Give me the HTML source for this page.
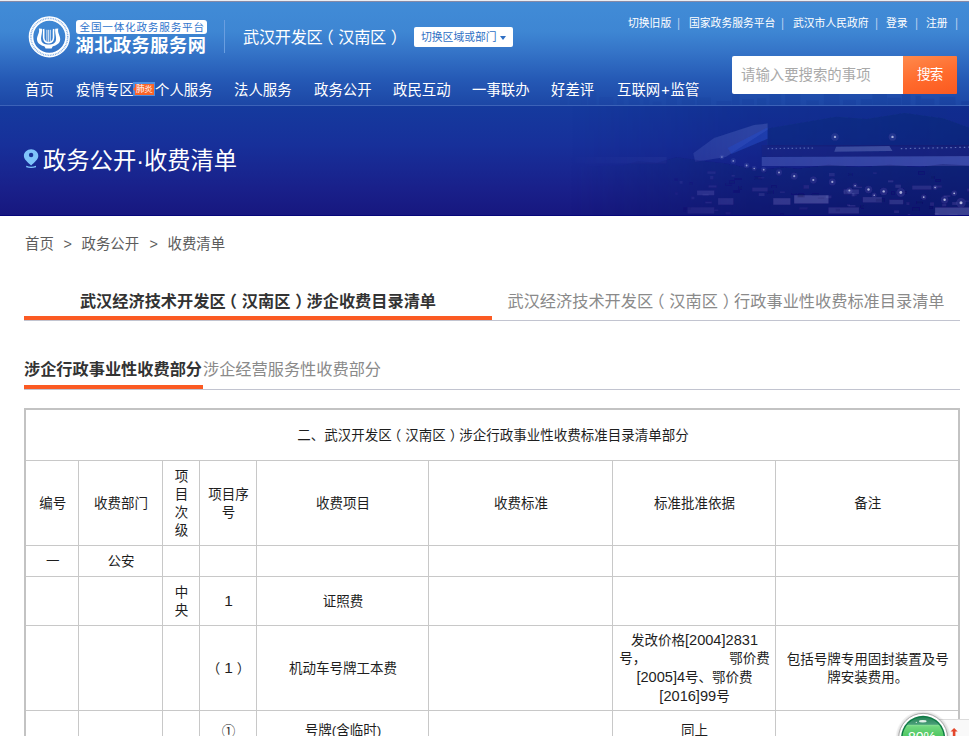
<!DOCTYPE html>
<html lang="zh-CN">
<head>
<meta charset="utf-8">
<title>政务公开·收费清单</title>
<style>
*{box-sizing:border-box;margin:0;padding:0}
html,body{width:969px;height:736px;overflow:hidden;background:#fff}
body{font-family:"Liberation Sans","Noto Sans CJK SC",sans-serif;color:#333;position:relative}
.abs{position:absolute;white-space:nowrap}
#hdr{position:absolute;left:0;top:0;width:969px;height:106px;background:linear-gradient(180deg,#418cd7 0%,#3e86d3 30%,#3473c7 50%,#2559b5 75%,#1c46a5 100%)}
#hdr .line{position:absolute;left:0;top:105px;width:969px;height:1px;background:#3c62b8}
#banner{position:absolute;left:0;top:106px;width:969px;height:110px;background:linear-gradient(180deg,#153a9e 0%,#17309a 35%,#19208a 75%,#17177f 100%);overflow:hidden}
.nav{position:absolute;top:80px;font-size:14.4px;line-height:20px;color:#fff;white-space:nowrap}
.top{position:absolute;top:15px;font-size:10.8px;line-height:16px;color:#fff;white-space:nowrap}
.sep{position:absolute;top:15px;font-size:12px;line-height:16px;color:#b4cdee}

#tb{position:absolute;left:24px;top:408px;width:936px;border-collapse:collapse;table-layout:fixed;border:2px solid #c3c3c3;font-size:13.5px;line-height:18px;color:#1e1e1e}
#tb td{border:1px solid #c8c8c8;text-align:center;vertical-align:middle;padding:2px 0 0 2px}
.bc{position:absolute;top:234px;font-size:14.4px;line-height:20px;color:#5c5c5c;white-space:nowrap}
.pl{position:relative;left:-.3em}.pr{position:relative;left:.3em}
.n{font-size:14.600px}.d{font-size:15.500px}
</style>
</head>
<body>
<div id="hdr">
  <svg id="sky" class="abs" style="left:560px;top:90px" width="409" height="15" viewBox="0 0 409 15"><rect x="0.0" y="6.6" width="7.6" height="8.4" fill="#0a2a88" opacity="0.05"/><rect x="9.8" y="5.7" width="11.6" height="9.3" fill="#0a2a88" opacity="0.05"/><rect x="21.9" y="3.6" width="5.1" height="11.4" fill="#0a2a88" opacity="0.06"/><rect x="28.6" y="2.0" width="7.6" height="13.0" fill="#0a2a88" opacity="0.06"/><rect x="39.0" y="7.2" width="14.2" height="7.8" fill="#0a2a88" opacity="0.06"/><rect x="57.0" y="5.7" width="6.7" height="9.3" fill="#0a2a88" opacity="0.07"/><rect x="68.9" y="4.6" width="10.8" height="10.4" fill="#0a2a88" opacity="0.07"/><rect x="83.7" y="4.4" width="5.7" height="10.6" fill="#0a2a88" opacity="0.07"/><rect x="92.9" y="11.7" width="8.3" height="3.3" fill="#0a2a88" opacity="0.08"/><rect x="106.4" y="4.8" width="10.2" height="10.2" fill="#0a2a88" opacity="0.08"/><rect x="121.9" y="2.8" width="12.9" height="12.2" fill="#0a2a88" opacity="0.09"/><rect x="137.1" y="7.6" width="13.8" height="7.4" fill="#0a2a88" opacity="0.09"/><rect x="156.5" y="11.0" width="14.7" height="4.0" fill="#0a2a88" opacity="0.10"/><rect x="172.0" y="2.3" width="7.4" height="12.7" fill="#0a2a88" opacity="0.10"/><rect x="182.0" y="9.0" width="11.9" height="6.0" fill="#0a2a88" opacity="0.10"/><rect x="197.0" y="8.5" width="9.2" height="6.5" fill="#0a2a88" opacity="0.11"/><rect x="209.7" y="3.0" width="11.4" height="12.0" fill="#0a2a88" opacity="0.11"/><rect x="225.2" y="3.4" width="15.2" height="11.6" fill="#0a2a88" opacity="0.12"/><rect x="246.4" y="10.4" width="12.4" height="4.6" fill="#0a2a88" opacity="0.12"/><rect x="263.9" y="3.0" width="15.6" height="12.0" fill="#0a2a88" opacity="0.13"/><rect x="283.0" y="9.9" width="12.9" height="5.1" fill="#0a2a88" opacity="0.13"/><rect x="300.8" y="9.2" width="11.3" height="5.8" fill="#0a2a88" opacity="0.14"/><rect x="312.5" y="2.1" width="14.4" height="12.9" fill="#0a2a88" opacity="0.14"/><rect x="327.4" y="7.9" width="13.8" height="7.1" fill="#0a2a88" opacity="0.15"/><rect x="342.1" y="4.3" width="8.2" height="10.7" fill="#0a2a88" opacity="0.15"/><rect x="355.6" y="5.9" width="5.5" height="9.1" fill="#0a2a88" opacity="0.15"/><rect x="361.4" y="8.7" width="12.9" height="6.3" fill="#0a2a88" opacity="0.16"/><rect x="379.6" y="6.9" width="15.8" height="8.1" fill="#0a2a88" opacity="0.16"/><rect x="401.3" y="11.2" width="8.4" height="3.8" fill="#0a2a88" opacity="0.17"/></svg>
  <div class="line"></div>
  <div class="abs" style="left:0;top:0;width:969px;height:1px;background:#e9ecf2"></div>
  <div class="abs" style="left:0;top:1px;width:969px;height:1px;background:#8589a6"></div>
  <!-- logo -->
  <svg class="abs" style="left:27px;top:15px" width="44" height="44" viewBox="0 0 44 44">
    <circle cx="22.300" cy="21.800" r="18.300" fill="none" stroke="#fff" stroke-width="4.600"/>
    <circle cx="22.300" cy="21.800" r="18.400" fill="none" stroke="#5a94dc" stroke-width="1.500" stroke-dasharray="0.900 0.800" opacity="0.750"/>
    <g transform="translate(-0.400,-0.200)" fill="#fff">
      <path d="M12.300 13.600C13.500 18 10 21 10.400 25C10.800 29 15 31 18 31.600L19 33.600L25 33.600L26 31.600C29 31 33.200 29 33.600 25C34 21 30.500 18 31.700 13.600L28.600 14C28.200 19 29.900 21.500 29.400 25C29 28.300 26 29.800 22 29.800C18 29.800 15 28.300 14.600 25C14.100 21.500 15.800 19 15.400 14Z"/>
      <path d="M16.900 14.200C17.700 19 16.300 22.500 17.600 25.200C18.600 27.400 20.400 28 22 28C23.600 28 25.400 27.400 26.400 25.200C27.700 22.500 26.300 19 27.100 14.200" fill="none" stroke="#fff" stroke-width="1.600"/>
      <path d="M20.300 15V27.500M22 15V27.500M23.700 15V27.500" fill="none" stroke="#fff" stroke-width="0.800"/>
    </g>
  </svg>
  <div class="abs" style="left:75.500px;top:20px;width:131px;height:13.500px;background:#fff;border-radius:3px"></div>
  <div class="abs" style="left:79.500px;top:18.800px;font-size:10.600px;line-height:16px;color:#2e74cc;letter-spacing:0.800px">全国一体化政务服务平台</div>
  <div class="abs" style="left:75.500px;top:33.300px;font-size:18.200px;line-height:26px;color:#fff;font-weight:700;letter-spacing:0.500px">湖北政务服务网</div>
  <div class="abs" style="left:224px;top:20px;width:1px;height:33px;background:#6a9ee0"></div>
  <div class="abs" style="left:243px;top:25px;font-size:16.2px;line-height:24px;color:#fff;letter-spacing:-0.3px">武汉开发区<span class="pl">（</span>汉南区<span class="pr">）</span></div>
  <div class="abs" style="left:414px;top:27px;width:99px;height:20px;background:#fff;border-radius:2px"></div>
  <div class="abs" style="left:421px;top:29px;font-size:10.8px;line-height:16px;color:#2e6fc4">切换区域或部门</div>
  <div class="abs" style="left:500px;top:36px;width:0;height:0;border-left:3px solid transparent;border-right:3px solid transparent;border-top:4px solid #2e6fc4"></div>

  <div class="top" style="left:628px">切换旧版</div>
  <div class="sep" style="left:677px">|</div>
  <div class="top" style="left:689px">国家政务服务平台</div>
  <div class="sep" style="left:781px">|</div>
  <div class="top" style="left:793px">武汉市人民政府</div>
  <div class="sep" style="left:875px">|</div>
  <div class="top" style="left:886px">登录</div>
  <div class="sep" style="left:915px">|</div>
  <div class="top" style="left:926px">注册</div>
  <div class="sep" style="left:955px">|</div>

  <div class="nav" style="left:25px">首页</div>
  <div class="nav" style="left:76px">疫情专区</div>
  <div class="abs" style="left:133px;top:82px;width:21.500px;height:13.500px;background:#4c8ee2"></div><div class="abs" style="left:135px;top:84px;width:19px;height:10.500px;background:#fb6428"></div><div class="abs" style="left:132.500px;top:86.500px;width:0;height:0;border-top:2.800px solid transparent;border-bottom:2.800px solid transparent;border-right:2.800px solid #fb6428"></div>
  <div class="abs" style="left:136px;top:83.500px;font-size:8.600px;line-height:11px;color:#fff;letter-spacing:-0.3px">肺炎</div>
  <div class="nav" style="left:155px">个人服务</div>
  <div class="nav" style="left:234px">法人服务</div>
  <div class="nav" style="left:314px">政务公开</div>
  <div class="nav" style="left:393px">政民互动</div>
  <div class="nav" style="left:472px">一事联办</div>
  <div class="nav" style="left:551px">好差评</div>
  <div class="nav" style="left:617px">互联网<span style="margin:0 1px">+</span>监管</div>

  <div class="abs" style="left:732px;top:56px;width:171px;height:38px;background:#fff;border-radius:2px 0 0 2px"></div>
  <div class="abs" style="left:741px;top:65px;font-size:14.4px;line-height:20px;color:#a9a9a9">请输入要搜索的事项</div>
  <div class="abs" style="left:903px;top:56px;width:54px;height:38px;background:linear-gradient(165deg,#ff8a4c 0%,#ff6a2c 55%,#fb591f 100%);border-radius:0 1px 1px 0"></div>
  <div class="abs" style="left:917px;top:65px;font-size:13.6px;line-height:20px;color:#fff;letter-spacing:-0.8px">搜索</div>
</div>

<div id="banner">
  <svg class="abs" style="left:0;top:-1px" width="969" height="110" viewBox="0 0 969 110"><defs><linearGradient id="fade" x1="0" x2="1" y1="0" y2="0"><stop offset="0" stop-color="#fff" stop-opacity="0"/><stop offset="0.45" stop-color="#fff" stop-opacity="0.75"/><stop offset="1" stop-color="#fff" stop-opacity="1"/></linearGradient><mask id="mk"><rect x="570" y="0" width="399" height="110" fill="url(#fade)"/></mask><filter id="bl" x="0" y="0" width="100%" height="100%"><feGaussianBlur stdDeviation="0.7"/></filter></defs><g mask="url(#mk)" filter="url(#bl)"><rect x="500" y="0" width="469" height="110" fill="#0c1450" opacity="0.22"/><polygon points="767.6,23.6 805.6,17.1 836.1,11.8 866.6,14.0 904.6,7.9 942.7,13.3 969.0,22.4 969.0,41.5 767.6,41.5" fill="#0e1a62" opacity="0.3"/><polygon points="761.8,39.9 969.0,39.9 969.0,52.1 761.8,52.1" fill="#101a68" opacity="0.36"/><polygon points="761.8,52.1 969.0,51.0 969.0,60.9 761.8,60.9" fill="#7480dc" opacity="0.4"/><polygon points="523.8,52.1 666.6,52.1 666.6,58.2 523.8,58.2" fill="#6f7ad8" opacity="0.16"/><polygon points="754.2,20.1 767.6,18.6 767.6,24.7 725.7,52.1 695.2,56.7 693.3,48.3 714.2,33.1" fill="#7686dc" opacity="0.32"/><polygon points="767.6,22.4 767.6,33.8 731.4,49.1 727.6,43.0" fill="#2a54d8" opacity="0.5"/><polygon points="523.8,62.8 622.8,60.5 638.1,55.9 657.1,57.8 676.2,52.1 699.0,55.2 725.7,58.2 744.7,62.0 763.7,64.3 782.8,62.0 798.0,63.5 828.5,59.7 858.9,62.0 889.4,59.7 919.9,62.0 942.7,59.0 969.0,60.5 969.0,111.1 523.8,111.1" fill="#0b1158" opacity="0.3"/><polygon points="836.1,41.8 889.4,41.1 892.5,46.0 834.2,46.8" fill="#b0baf2" opacity="0.3"/><line x1="767.6" y1="43.7" x2="813.3" y2="43.0" stroke="#c8d0ff" stroke-width="1.2" stroke-dasharray="1.5 2.5" opacity="0.45"/><line x1="900.8" y1="43.7" x2="969.0" y2="42.2" stroke="#c8d0ff" stroke-width="1.2" stroke-dasharray="1.5 3" opacity="0.45"/><polygon points="794.2,90.2 828.5,90.2 828.5,98.6 794.2,98.6" fill="#a0aae4" opacity="0.36"/><polygon points="697.1,85.6 714.2,85.6 714.2,90.2 697.1,90.2" fill="#a0aae4" opacity="0.28"/><polygon points="718.1,93.2 733.3,93.2 733.3,99.7 718.1,99.7" fill="#a0aae4" opacity="0.22"/><polygon points="773.3,93.2 790.4,93.2 790.4,99.7 773.3,99.7" fill="#a0aae4" opacity="0.28"/><polygon points="843.7,84.5 858.9,84.5 858.9,89.1 843.7,89.1" fill="#a0aae4" opacity="0.2"/><polygon points="862.8,92.1 881.8,92.1 881.8,97.4 862.8,97.4" fill="#a0aae4" opacity="0.22"/><polygon points="889.4,94.8 903.1,94.8 903.1,99.3 889.4,99.3" fill="#a0aae4" opacity="0.2"/><polygon points="912.3,80.7 931.3,80.7 931.3,84.5 912.3,84.5" fill="#a0aae4" opacity="0.16"/><polygon points="935.1,102.4 969.0,102.4 969.0,110.0 935.1,110.0" fill="#a0aae4" opacity="0.3"/><polygon points="828.5,102.4 858.9,102.4 858.9,108.5 828.5,108.5" fill="#a0aae4" opacity="0.2"/><polygon points="687.6,102.4 714.2,102.4 714.2,108.5 687.6,108.5" fill="#a0aae4" opacity="0.18"/><polygon points="752.3,82.6 767.6,82.6 767.6,86.4 752.3,86.4" fill="#a0aae4" opacity="0.15"/><polygon points="758.1,72.1 764.4,72.1 764.4,73.4 758.1,73.4" fill="#8c98dc" opacity="0.12"/><polygon points="675.2,87.7 677.7,87.7 677.7,89.8 675.2,89.8" fill="#8c98dc" opacity="0.11"/><polygon points="829.0,68.0 834.7,68.0 834.7,71.3 829.0,71.3" fill="#8c98dc" opacity="0.15"/><polygon points="780.8,108.2 783.4,108.2 783.4,111.3 780.8,111.3" fill="#060a40" opacity="0.13"/><polygon points="825.8,90.5 831.4,90.5 831.4,93.2 825.8,93.2" fill="#8c98dc" opacity="0.15"/><polygon points="856.4,81.8 862.0,81.8 862.0,83.0 856.4,83.0" fill="#8c98dc" opacity="0.15"/><polygon points="811.9,88.7 819.0,88.7 819.0,90.9 811.9,90.9" fill="#060a40" opacity="0.12"/><polygon points="734.6,73.3 741.6,73.3 741.6,74.7 734.6,74.7" fill="#060a40" opacity="0.14"/><polygon points="930.1,97.4 934.1,97.4 934.1,100.8 930.1,100.8" fill="#8c98dc" opacity="0.14"/><polygon points="708.6,80.4 716.5,80.4 716.5,82.5 708.6,82.5" fill="#8c98dc" opacity="0.17"/><polygon points="835.8,103.8 840.0,103.8 840.0,106.5 835.8,106.5" fill="#060a40" opacity="0.15"/><polygon points="799.4,102.2 807.4,102.2 807.4,104.5 799.4,104.5" fill="#8c98dc" opacity="0.09"/><polygon points="875.9,93.8 884.2,93.8 884.2,96.8 875.9,96.8" fill="#060a40" opacity="0.17"/><polygon points="933.8,80.6 941.8,80.6 941.8,82.6 933.8,82.6" fill="#8c98dc" opacity="0.14"/><polygon points="725.2,78.0 732.0,78.0 732.0,80.1 725.2,80.1" fill="#060a40" opacity="0.09"/><polygon points="797.2,89.5 804.9,89.5 804.9,92.5 797.2,92.5" fill="#060a40" opacity="0.16"/><polygon points="964.8,95.3 969.4,95.3 969.4,97.0 964.8,97.0" fill="#8c98dc" opacity="0.1"/><polygon points="729.5,75.7 734.7,75.7 734.7,78.2 729.5,78.2" fill="#060a40" opacity="0.11"/><polygon points="702.6,88.9 708.6,88.9 708.6,90.7 702.6,90.7" fill="#8c98dc" opacity="0.16"/><polygon points="817.9,92.5 824.3,92.5 824.3,93.8 817.9,93.8" fill="#060a40" opacity="0.13"/><polygon points="780.0,86.5 784.8,86.5 784.8,88.1 780.0,88.1" fill="#8c98dc" opacity="0.13"/><polygon points="691.4,91.8 694.3,91.8 694.3,94.2 691.4,94.2" fill="#8c98dc" opacity="0.19"/><polygon points="848.5,68.5 852.1,68.5 852.1,70.5 848.5,70.5" fill="#060a40" opacity="0.19"/><polygon points="845.0,86.2 847.9,86.2 847.9,88.5 845.0,88.5" fill="#060a40" opacity="0.14"/><polygon points="754.4,71.8 761.2,71.8 761.2,74.6 754.4,74.6" fill="#060a40" opacity="0.18"/><polygon points="707.5,66.5 715.5,66.5 715.5,68.8 707.5,68.8" fill="#8c98dc" opacity="0.16"/><polygon points="942.2,98.7 946.3,98.7 946.3,101.3 942.2,101.3" fill="#8c98dc" opacity="0.16"/><polygon points="738.6,81.5 741.9,81.5 741.9,84.4 738.6,84.4" fill="#060a40" opacity="0.16"/><polygon points="848.4,100.0 855.3,100.0 855.3,101.6 848.4,101.6" fill="#8c98dc" opacity="0.18"/><polygon points="887.9,75.4 893.3,75.4 893.3,77.3 887.9,77.3" fill="#8c98dc" opacity="0.2"/><polygon points="903.5,86.1 907.0,86.1 907.0,88.7 903.5,88.7" fill="#060a40" opacity="0.13"/><polygon points="949.4,108.7 957.5,108.7 957.5,110.7 949.4,110.7" fill="#8c98dc" opacity="0.09"/><polygon points="803.7,80.2 809.0,80.2 809.0,83.6 803.7,83.6" fill="#8c98dc" opacity="0.14"/><polygon points="860.8,100.5 863.6,100.5 863.6,103.1 860.8,103.1" fill="#060a40" opacity="0.17"/><polygon points="891.1,86.4 894.4,86.4 894.4,89.3 891.1,89.3" fill="#060a40" opacity="0.09"/><polygon points="952.2,97.1 957.3,97.1 957.3,99.9 952.2,99.9" fill="#8c98dc" opacity="0.17"/><polygon points="710.1,71.0 713.3,71.0 713.3,74.2 710.1,74.2" fill="#8c98dc" opacity="0.15"/><polygon points="843.0,86.2 851.0,86.2 851.0,87.7 843.0,87.7" fill="#8c98dc" opacity="0.08"/><polygon points="906.4,97.3 909.3,97.3 909.3,100.1 906.4,100.1" fill="#8c98dc" opacity="0.13"/><polygon points="929.0,101.6 932.6,101.6 932.6,103.3 929.0,103.3" fill="#060a40" opacity="0.14"/><polygon points="895.3,79.7 900.9,79.7 900.9,82.8 895.3,82.8" fill="#8c98dc" opacity="0.19"/><polygon points="767.5,85.5 773.3,85.5 773.3,88.7 767.5,88.7" fill="#060a40" opacity="0.18"/><polygon points="931.0,71.2 934.2,71.2 934.2,73.5 931.0,73.5" fill="#060a40" opacity="0.17"/><polygon points="846.9,99.4 850.1,99.4 850.1,100.9 846.9,100.9" fill="#8c98dc" opacity="0.15"/><polygon points="758.8,88.1 764.5,88.1 764.5,91.1 758.8,91.1" fill="#8c98dc" opacity="0.19"/><polygon points="674.8,73.8 677.4,73.8 677.4,75.2 674.8,75.2" fill="#060a40" opacity="0.15"/><polygon points="894.1,105.4 899.1,105.4 899.1,108.0 894.1,108.0" fill="#8c98dc" opacity="0.16"/><polygon points="798.2,88.8 803.4,88.8 803.4,92.1 798.2,92.1" fill="#060a40" opacity="0.19"/><polygon points="935.6,74.3 940.6,74.3 940.6,76.4 935.6,76.4" fill="#060a40" opacity="0.13"/><polygon points="679.7,76.0 682.5,76.0 682.5,78.7 679.7,78.7" fill="#8c98dc" opacity="0.19"/><polygon points="705.3,96.8 711.6,96.8 711.6,98.3 705.3,98.3" fill="#8c98dc" opacity="0.2"/><polygon points="725.6,107.2 730.3,107.2 730.3,109.4 725.6,109.4" fill="#8c98dc" opacity="0.1"/><polygon points="791.7,88.0 796.1,88.0 796.1,89.6 791.7,89.6" fill="#060a40" opacity="0.09"/><polygon points="771.3,80.3 776.3,80.3 776.3,83.0 771.3,83.0" fill="#060a40" opacity="0.12"/><polygon points="851.7,87.9 854.4,87.9 854.4,91.3 851.7,91.3" fill="#8c98dc" opacity="0.2"/><polygon points="689.8,77.1 692.3,77.1 692.3,80.0 689.8,80.0" fill="#060a40" opacity="0.17"/><polygon points="912.8,102.7 919.2,102.7 919.2,106.0 912.8,106.0" fill="#060a40" opacity="0.1"/><polygon points="943.8,90.4 950.3,90.4 950.3,91.8 943.8,91.8" fill="#8c98dc" opacity="0.18"/><polygon points="714.3,104.7 718.2,104.7 718.2,105.8 714.3,105.8" fill="#8c98dc" opacity="0.18"/><polygon points="683.2,102.9 685.9,102.9 685.9,106.1 683.2,106.1" fill="#060a40" opacity="0.08"/><polygon points="967.2,83.7 975.1,83.7 975.1,86.3 967.2,86.3" fill="#8c98dc" opacity="0.14"/><polygon points="731.5,70.2 734.8,70.2 734.8,71.5 731.5,71.5" fill="#8c98dc" opacity="0.19"/><polygon points="853.2,88.7 856.7,88.7 856.7,90.9 853.2,90.9" fill="#8c98dc" opacity="0.11"/><polygon points="907.8,109.0 910.3,109.0 910.3,110.2 907.8,110.2" fill="#8c98dc" opacity="0.14"/><polygon points="733.7,85.0 740.0,85.0 740.0,87.7 733.7,87.7" fill="#060a40" opacity="0.15"/><polygon points="934.3,107.9 938.5,107.9 938.5,109.6 934.3,109.6" fill="#8c98dc" opacity="0.12"/><polygon points="916.7,96.4 922.9,96.4 922.9,98.5 916.7,98.5" fill="#060a40" opacity="0.2"/><polygon points="918.2,66.1 924.3,66.1 924.3,69.2 918.2,69.2" fill="#060a40" opacity="0.1"/><polygon points="683.5,102.3 691.1,102.3 691.1,105.0 683.5,105.0" fill="#060a40" opacity="0.15"/><polygon points="873.2,67.4 876.6,67.4 876.6,69.2 873.2,69.2" fill="#8c98dc" opacity="0.11"/><circle cx="835.0" cy="31.9" r="3.7" fill="#aab4ff" opacity="0.13"/><circle cx="835.0" cy="31.9" r="1.2" fill="#e4e8ff" opacity="0.75"/><circle cx="892.5" cy="31.9" r="3.7" fill="#aab4ff" opacity="0.13"/><circle cx="892.5" cy="31.9" r="1.2" fill="#e4e8ff" opacity="0.75"/><circle cx="794.2" cy="71.2" r="3.4" fill="#aab4ff" opacity="0.13"/><circle cx="794.2" cy="71.2" r="1.1" fill="#e4e8ff" opacity="0.75"/><circle cx="813.3" cy="75.0" r="3.4" fill="#aab4ff" opacity="0.13"/><circle cx="813.3" cy="75.0" r="1.1" fill="#e4e8ff" opacity="0.75"/><circle cx="832.3" cy="76.9" r="3.4" fill="#aab4ff" opacity="0.13"/><circle cx="832.3" cy="76.9" r="1.1" fill="#e4e8ff" opacity="0.75"/><circle cx="868.5" cy="84.5" r="3.7" fill="#aab4ff" opacity="0.13"/><circle cx="868.5" cy="84.5" r="1.2" fill="#e4e8ff" opacity="0.75"/><circle cx="883.7" cy="86.4" r="3.7" fill="#aab4ff" opacity="0.13"/><circle cx="883.7" cy="86.4" r="1.2" fill="#e4e8ff" opacity="0.75"/><circle cx="900.8" cy="87.5" r="4.4" fill="#aab4ff" opacity="0.13"/><circle cx="900.8" cy="87.5" r="1.4" fill="#e4e8ff" opacity="0.75"/><circle cx="944.6" cy="94.8" r="3.7" fill="#aab4ff" opacity="0.13"/><circle cx="944.6" cy="94.8" r="1.2" fill="#e4e8ff" opacity="0.75"/><circle cx="961.0" cy="97.8" r="4.8" fill="#aab4ff" opacity="0.13"/><circle cx="961.0" cy="97.8" r="1.5" fill="#e4e8ff" opacity="0.75"/><circle cx="746.6" cy="60.5" r="2.7" fill="#aab4ff" opacity="0.13"/><circle cx="746.6" cy="60.5" r="0.9" fill="#e4e8ff" opacity="0.75"/><circle cx="733.3" cy="55.9" r="2.7" fill="#aab4ff" opacity="0.13"/><circle cx="733.3" cy="55.9" r="0.9" fill="#e4e8ff" opacity="0.75"/><circle cx="763.7" cy="64.7" r="2.7" fill="#aab4ff" opacity="0.13"/><circle cx="763.7" cy="64.7" r="0.9" fill="#e4e8ff" opacity="0.75"/><circle cx="779.0" cy="67.4" r="3.1" fill="#aab4ff" opacity="0.13"/><circle cx="779.0" cy="67.4" r="1.0" fill="#e4e8ff" opacity="0.75"/><circle cx="849.4" cy="85.6" r="3.1" fill="#aab4ff" opacity="0.13"/><circle cx="849.4" cy="85.6" r="1.0" fill="#e4e8ff" opacity="0.75"/><circle cx="923.7" cy="92.1" r="2.7" fill="#aab4ff" opacity="0.13"/><circle cx="923.7" cy="92.1" r="0.9" fill="#e4e8ff" opacity="0.75"/><circle cx="721.9" cy="52.1" r="2.4" fill="#aab4ff" opacity="0.13"/><circle cx="721.9" cy="52.1" r="0.8" fill="#e4e8ff" opacity="0.75"/><circle cx="754.2" cy="63.5" r="2.4" fill="#aab4ff" opacity="0.13"/><circle cx="754.2" cy="63.5" r="0.8" fill="#e4e8ff" opacity="0.75"/><circle cx="855.1" cy="80.7" r="2.4" fill="#aab4ff" opacity="0.13"/><circle cx="855.1" cy="80.7" r="0.8" fill="#e4e8ff" opacity="0.75"/><circle cx="874.2" cy="90.2" r="2.4" fill="#aab4ff" opacity="0.13"/><circle cx="874.2" cy="90.2" r="0.8" fill="#e4e8ff" opacity="0.75"/><circle cx="935.1" cy="82.6" r="2.4" fill="#aab4ff" opacity="0.13"/><circle cx="935.1" cy="82.6" r="0.8" fill="#e4e8ff" opacity="0.75"/><circle cx="954.2" cy="88.3" r="2.7" fill="#aab4ff" opacity="0.13"/><circle cx="954.2" cy="88.3" r="0.9" fill="#e4e8ff" opacity="0.75"/></g></svg>
  <svg class="abs" style="left:23px;top:43px" width="17" height="20" viewBox="0 0 17 20">
    <path d="M8.100 0.200C4.100 0.200 0.900 3.200 0.900 6.900C0.900 10.400 4.800 13.200 8.100 16.400C11.400 13.200 15.300 10.400 15.300 6.900C15.300 3.200 12.100 0.200 8.100 0.200Z" fill="#7fc4fb"/>
    <circle cx="8.100" cy="6" r="2.200" fill="#1a3499"/>
    <path d="M3.200 16.700Q8.100 18.600 13 16.700L13 18.200Q8.100 19.800 3.200 18.200Z" fill="#7fc4fb"/>
  </svg>
  <div class="abs" style="left:0;top:109px;width:969px;height:1px;background:#06067a"></div>
  <div class="abs" style="left:43px;top:38px;font-size:23.3px;line-height:34px;color:#fff">政务公开·收费清单</div>
</div>

<!-- breadcrumb -->
<div class="bc" style="left:25px">首页</div><div class="bc" style="left:63.500px">&gt;</div><div class="bc" style="left:81.500px">政务公开</div><div class="bc" style="left:149.500px">&gt;</div><div class="bc" style="left:167.500px">收费清单</div>

<!-- main tabs -->
<div class="abs" style="left:24px;top:320px;width:936px;height:1px;background:#c2c4d0"></div>
<div class="abs" style="left:24px;top:316px;width:468px;height:4px;background:#fb5a23"></div>
<div class="abs" style="left:24px;top:288px;width:468px;text-align:center;font-size:16.2px;line-height:26px;color:#333;font-weight:700">武汉经济技术开发区<span class="pl">（</span>汉南区<span class="pr">）</span>涉企收费目录清单</div>
<div class="abs" style="left:492px;top:288px;width:468px;text-align:center;font-size:16.2px;line-height:26px;color:#8a8a8a">武汉经济技术开发区<span class="pl">（</span>汉南区<span class="pr">）</span>行政事业性收费标准目录清单</div>

<!-- sub tabs -->
<div class="abs" style="left:24px;top:389px;width:936px;height:1px;background:#c2c4d0"></div>
<div class="abs" style="left:24px;top:385px;width:179px;height:4px;background:#fb5a23"></div>
<div class="abs" style="left:24px;top:356px;font-size:16.2px;line-height:26px;color:#333;font-weight:700">涉企行政事业性收费部分</div>
<div class="abs" style="left:203px;top:356px;font-size:16.2px;line-height:26px;color:#8a8a8a">涉企经营服务性收费部分</div>

<!-- table -->
<table id="tb" cellspacing="0">
<colgroup><col style="width:53px"><col style="width:84px"><col style="width:37px"><col style="width:57px"><col style="width:172px"><col style="width:184px"><col style="width:163px"><col style="width:184px"></colgroup>
<tr style="height:51px"><td colspan="8">二、武汉开发区<span class="pl">（</span>汉南区<span class="pr">）</span>涉企行政事业性收费标准目录清单部分</td></tr>
<tr style="height:85px"><td>编号</td><td>收费部门</td><td>项<br>目<br>次<br>级</td><td>项目序<br>号</td><td>收费项目</td><td>收费标准</td><td>标准批准依据</td><td>备注</td></tr>
<tr style="height:31px"><td>一</td><td>公安</td><td></td><td></td><td></td><td></td><td></td><td></td></tr>
<tr style="height:49px"><td></td><td></td><td>中<br>央</td><td><span class="d">1</span></td><td>证照费</td><td></td><td></td><td></td></tr>
<tr style="height:85px"><td></td><td></td><td></td><td><span class="pl">（</span><span class="d">1</span><span class="pr">）</span></td><td>机动车号牌工本费</td><td></td><td class="ref">发改价格<span class="n">[2004]2831</span><br>号，<span style="display:inline-block;width:83px"></span>鄂价费<br><span class="n">[2005]4</span>号、鄂价费<br><span class="n">[2016]99</span>号</td><td>包括号牌专用固封装置及号<br>牌安装费用。</td></tr>
<tr style="height:60px"><td></td><td></td><td></td><td style="vertical-align:top;padding-top:12px">①</td><td style="vertical-align:top;padding-top:11px">号牌(含临时)</td><td></td><td style="vertical-align:top;padding-top:11px">同上</td><td></td></tr>
</table>

<!-- floating widget -->
<div class="abs" style="left:938px;top:719px;width:31px;height:17px;background:#f9f9f9;border-top:1px solid #dcdcdc;border-left:1px solid #dcdcdc"></div>
<svg class="abs" style="left:889px;top:706px" width="80" height="30" viewBox="889 706 80 30">
  <defs>
    <radialGradient id="sh" cx="923.100" cy="738.300" r="28" gradientUnits="userSpaceOnUse"><stop offset="0.860" stop-color="#000" stop-opacity="0.180"/><stop offset="1" stop-color="#000" stop-opacity="0"/></radialGradient>
    <linearGradient id="cap" x1="0" y1="716" x2="0" y2="725" gradientUnits="userSpaceOnUse"><stop offset="0" stop-color="#1f7f50"/><stop offset="1" stop-color="#4da07c"/></linearGradient>
    <linearGradient id="gr" x1="0" y1="725" x2="0" y2="737" gradientUnits="userSpaceOnUse"><stop offset="0" stop-color="#86e093"/><stop offset="0.150" stop-color="#6fd67e"/><stop offset="1" stop-color="#4cc660"/></linearGradient>
    <clipPath id="cc"><circle cx="923.100" cy="737.800" r="20.600"/></clipPath>
  </defs>
  <circle cx="923.100" cy="738.300" r="28" fill="url(#sh)"/>
  <circle cx="923.100" cy="737.800" r="24.400" fill="#fff" stroke="#8f8f8f" stroke-width="0.700"/>
  <circle cx="923.100" cy="737.800" r="22" fill="#0e7a45"/>
  <g clip-path="url(#cc)">
    <rect x="900" y="715" width="48" height="10" fill="url(#cap)"/>
    <rect x="900" y="724.800" width="48" height="14" fill="url(#gr)"/>
  </g>
  <ellipse cx="922.800" cy="721.200" rx="3.800" ry="1.200" fill="#fff" opacity="0.850"/>
  <circle cx="916.300" cy="722.400" r="0.600" fill="#fff" opacity="0.800"/>
  <path d="M954.100 727.900l3.600 3.700h-2.300v4.500h-2.600v-4.500h-2.300z" fill="#e4472b"/>
</svg>
<div class="abs" style="left:908px;top:729px;font-size:14px;line-height:16px;color:#fff">80%</div>

</body>
</html>
